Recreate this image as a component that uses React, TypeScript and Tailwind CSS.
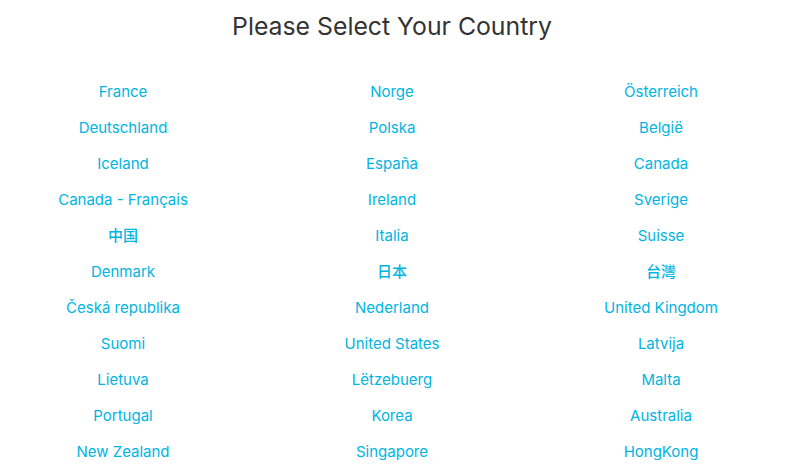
import React from 'react';

const columns: string[][] = [
  ['France', 'Deutschland', 'Iceland', 'Canada - Français', '中国', 'Denmark', 'Česká republika', 'Suomi', 'Lietuva', 'Portugal', 'New Zealand'],
  ['Norge', 'Polska', 'España', 'Ireland', 'Italia', '日本', 'Nederland', 'United States', 'Lëtzebuerg', 'Korea', 'Singapore'],
  ['Österreich', 'België', 'Canada', 'Sverige', 'Suisse', '台灣', 'United Kingdom', 'Latvija', 'Malta', 'Australia', 'HongKong'],
];

const isCjk = (s: string) => /[\u4e00-\u9fff]/.test(s);

export default function App() {
  return (
    <div className="w-[796px] h-[475px] overflow-hidden bg-white font-['Inter','Noto_Sans_CJK_TC',sans-serif]">
      <div className="w-[784px]">
        <h1 className="text-center text-[24.8px] leading-[32px] pt-[10px] text-[#333333] font-normal">
          Please Select Your Country
        </h1>
        {/* country grid */}
        <div className="w-[807px] -ml-[11.5px] mt-[32px] grid grid-cols-3">
          {columns.map((col, i) => (
            <ul key={i} className="flex flex-col items-center">
              {col.map((name) => (
                <li
                  key={name}
                  className={
                    isCjk(name)
                      ? 'h-[36px] leading-[36px] text-[15px] text-[#00b5e2] font-medium'
                      : 'h-[36px] leading-[36px] text-[15px] text-[#00b5e2]'
                  }
                >
                  <a href="#">{name}</a>
                </li>
              ))}
            </ul>
          ))}
        </div>
      </div>
    </div>
  );
}
